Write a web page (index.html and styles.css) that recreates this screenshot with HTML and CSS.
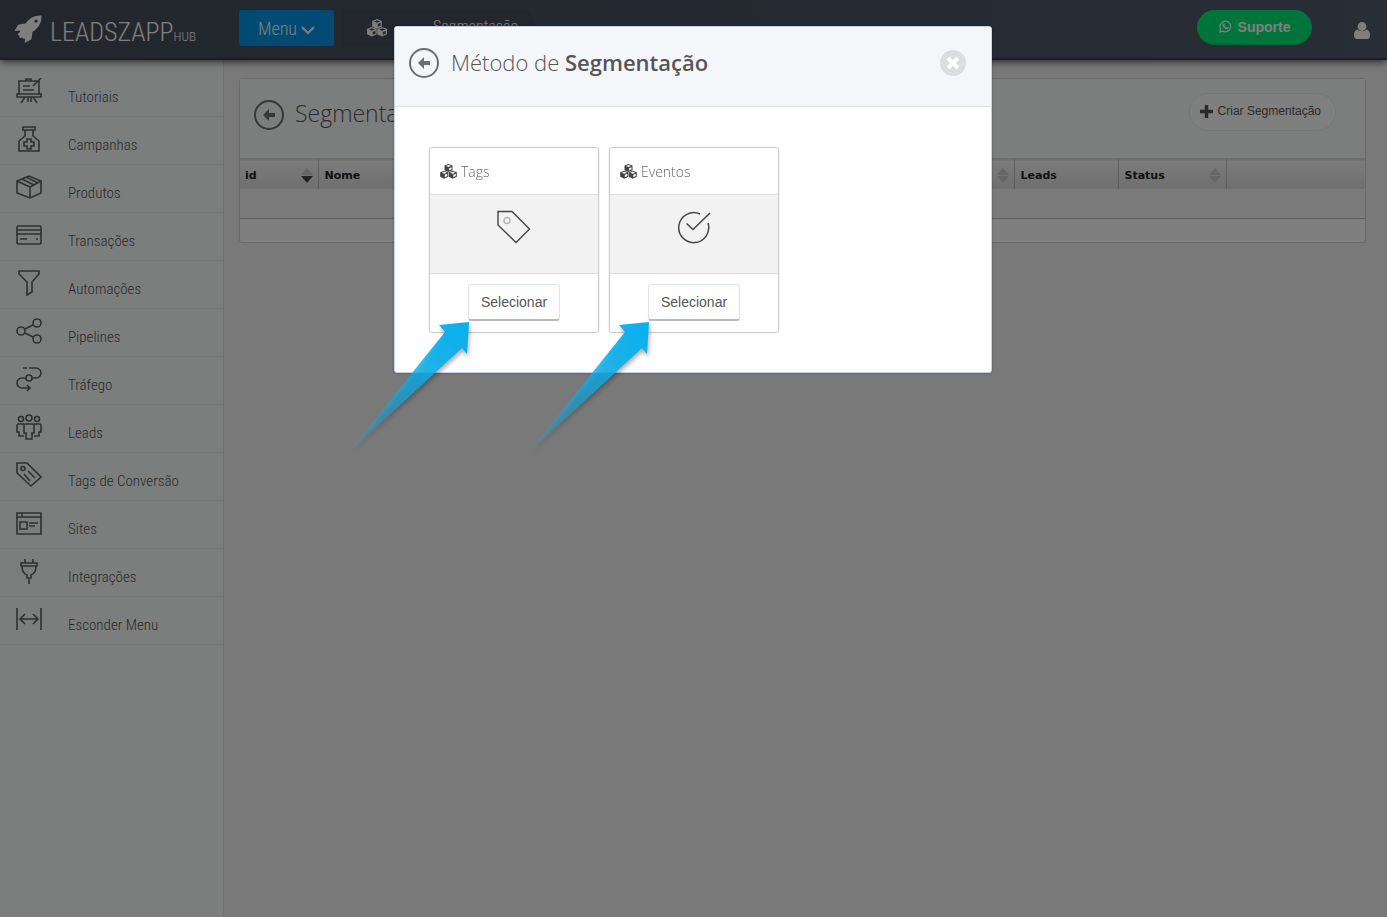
FILE: index.html
```html
<!DOCTYPE html>
<html lang="pt-BR">
<head>
    <meta charset="UTF-8">
    <meta name="viewport" content="width=device-width, initial-scale=1.0">
    <title>LeadszApp Hub - Segmentação</title>
    <link rel="stylesheet" href="styles.css">
</head>
<body>
    <!-- shared icons -->
    <svg class="sprite" aria-hidden="true">
        <symbol id="cubes" viewBox="0 0 20 18">
            <g fill="currentColor">
                <path d="M10 0l4.800 1.900v5.600L10 9.700 5.200 7.500V1.900z"/>
                <path d="M4.900 8l4.800 2v5.300l-4.800 2.300L0 15.300V10z"/>
                <path d="M15.100 8l4.900 2v5.300l-4.900 2.300-4.800-2.300V10z"/>
            </g>
            <g class="cube-top">
                <path d="M10 1.300l3 1.200-3 1.200-3-1.200z"/>
                <path d="M4.900 9.300l3 1.200-3 1.200-3-1.200z"/>
                <path d="M15.100 9.300l3 1.200-3 1.200-3-1.200z"/>
                <path d="M10.700 5l2.900-1.200v2.600l-2.900 1.300z"/>
                <path d="M5.600 13l2.900-1.200v2.600l-2.900 1.400z"/>
                <path d="M15.800 13l2.900-1.200v2.600l-2.900 1.400z"/>
            </g>
        </symbol>
        <symbol id="back" viewBox="0 0 30 30">
            <circle cx="15" cy="15" r="14" fill="none" stroke="currentColor" stroke-width="2"/>
            <path d="M9 15l6-6v4h6v4h-6v4z" fill="currentColor"/>
        </symbol>
        <symbol id="arrow" viewBox="0 0 130 140">
            <path d="M124 7L94 10l6 7L2 139l115-106 5 6z" fill="url(#arrowFill)"/>
        </symbol>
        <linearGradient id="arrowFill" gradientUnits="userSpaceOnUse" x1="118" y1="14" x2="2" y2="139">
            <stop offset="0" stop-color="#0ab0ee"/>
            <stop offset="0.250" stop-color="#0ab0ee" stop-opacity="0.900"/>
            <stop offset="0.500" stop-color="#0ab0ee" stop-opacity="0.680"/>
            <stop offset="1" stop-color="#0ab0ee" stop-opacity="0.080"/>
        </linearGradient>
    </svg>

    <header class="topbar">
        <a class="logo" href="#">
            <svg class="logo-icon" viewBox="0 0 28 28" fill="currentColor">
                <path fill-rule="evenodd" d="M27.500.500C20 .300 15.500 3 11.500 8.500L5 9.500c-.600.100-1 .600-1.300 1.100L.500 16l6-.500-1 2-2 1.500 1.800 2 .400 2.200 2-.700 2.300 1.500 1-.700-.200 4.700 5.700-3.200c.800-.500 1.100-1 1.200-1.800l.700-6C24.500 13 27.800 8 27.500.500zM22 4.400a1.700 1.700 0 1 1 0 3.400 1.700 1.700 0 0 1 0-3.400z"/>
            </svg>
            <span class="logo-text">LEADSZAPP<small>HUB</small></span>
        </a>
        <button class="menu-btn" type="button">Menu
            <svg viewBox="0 0 14 9" width="14" height="9"><path d="M1 1l6 6 6-6" fill="none" stroke="currentColor" stroke-width="2"/></svg>
        </button>
        <nav class="crumbs">
            <a href="#" class="crumb-home" aria-label="Início"><svg width="20" height="18"><use href="#cubes"/></svg></a>
            <a href="#" class="crumb-page">Segmentação</a>
        </nav>
        <button class="support-btn" type="button">
            <svg viewBox="0 0 14 14" width="13" height="13">
                <path d="M1 13l.900-3.200a5.700 5.700 0 1 1 2.200 2.200z" fill="none" stroke="currentColor" stroke-width="1.300"/>
                <path d="M4.500 3.800l1-.200.800 1.800-.600.800c.500 1 1.200 1.600 2.100 2l.800-.800 1.700.900c.100 1-.900 1.700-1.800 1.600C6 9.600 4 7.300 3.900 5.300c0-.700.200-1.200.600-1.500z" fill="currentColor"/>
            </svg>
            Suporte
        </button>
        <a class="user" href="#" aria-label="Usuário">
            <svg viewBox="0 0 16 17" width="16" height="17" fill="currentColor"><circle cx="8" cy="4.500" r="4.400"/><path d="M3.800 7.500C1 7.800 0 10.500 0 13.500 0 15.500 1 17 3 17h10c2 0 3-1.500 3-3.500 0-3-1-5.700-3.800-6C10 9.800 6 9.800 3.800 7.500z"/></svg>
        </a>
    </header>

    <div class="layout">
        <nav class="sidebar">
            <a href="#"><svg viewBox="0 0 26 26"><path d="M3 16V3h20v13M1 16h24v3H1zM10 3V1h5v2M7 8h7M7 12h11M17 8l8-8M9 19l-4 6M17 19l4 6M12 19v5M15 19v5"/></svg><span>Tutoriais</span></a>
            <a href="#"><svg viewBox="0 0 26 26"><path d="M7 1h12v3H7zM9 4v6l-6 5v10h20V15l-6-5V4M11 13h4v3h3v4h-3v3h-4v-3H8v-4h3z"/></svg><span>Campanhas</span></a>
            <a href="#"><svg viewBox="0 0 26 26"><path d="M1 7l12-5 12 5v12l-11 5-13-5zM1 7l13 6 11-6M14 13v11M6 5l12 6M10 3l12 6"/></svg><span>Produtos</span></a>
            <a href="#"><svg viewBox="0 0 26 26"><path d="M2 4h22l1 1v16l-1 1H2l-1-1V5zM1 8h24M1 12h24M4 17h7M20 17h2"/></svg><span>Transações</span></a>
            <a href="#"><svg viewBox="0 0 26 26"><path d="M3 1h20v3l-7 8v10l-5 3V12L3 4z"/></svg><span>Automações</span></a>
            <a href="#"><svg viewBox="0 0 26 26"><circle cx="5" cy="13" r="4"/><circle cx="21" cy="5" r="4"/><circle cx="21" cy="21" r="4"/><path d="M9 11l8-4M9 15l8 4"/></svg><span>Pipelines</span></a>
            <a href="#"><svg viewBox="0 0 26 26"><circle cx="13" cy="12" r="3"/><path d="M7 2h4M13 2h7a5 5 0 0 1 0 10h-4M10 12H6a5 5 0 0 0 0 10h8M11 19l3 3-3 3"/></svg><span>Tráfego</span></a>
            <a href="#"><svg viewBox="0 0 26 26"><circle cx="13" cy="4" r="3"/><circle cx="5" cy="5" r="2.500"/><circle cx="21" cy="5" r="2.500"/><path d="M9 10h8l1 1v8h-2v6h-6v-6H8v-8zM8 10H2l-1 1v7h2v4h5M18 10h6l1 1v7h-2v4h-5"/></svg><span>Leads</span></a>
            <a href="#"><svg viewBox="0 0 26 26"><path d="M1 1h10l14 14-10 9L1 11zM8 12l6 7M12 9l7 7"/><circle cx="7" cy="6.500" r="2"/></svg><span>Tags de Conversão</span></a>
            <a href="#"><svg viewBox="0 0 26 26"><path d="M1 3h24v21H1zM1 7h24M6 3v4M4 12h7v7H4zM13 13h9M13 16h6"/></svg><span>Sites</span></a>
            <a href="#"><svg viewBox="0 0 26 26"><path d="M9 1v4M17 1v4M5 5h16v3H5zM6 8c0 6 2 8 5 9v3h4v-3c3-1 5-3 5-9M13 21v5"/></svg><span>Integrações</span></a>
            <a href="#"><svg viewBox="0 0 26 26"><path d="M1 2v22M25 2v22M5 13h16M9 8l-5 5 5 5M17 8l5 5-5 5"/></svg><span>Esconder Menu</span></a>
        </nav>

        <main class="content">
            <section class="panel">
                <div class="panel-head">
                    <a href="#" class="back" aria-label="Voltar"><svg width="30" height="30"><use href="#back"/></svg></a>
                    <h1>Segmentação</h1>
                    <button class="create-btn" type="button">
                        <svg viewBox="0 0 13 13" width="13" height="13"><path d="M6.500 0v13M0 6.500h13" stroke="currentColor" stroke-width="3.500"/></svg>
                        Criar Segmentação
                    </button>
                </div>
                <table class="grid">
                    <thead>
                        <tr>
                            <th class="col-id"><div>id<i class="sort desc"></i></div></th>
                            <th><div>Nome<i class="sort"></i></div></th>
                            <th class="col-leads"><div>Leads</div></th>
                            <th class="col-status"><div>Status<i class="sort"></i></div></th>
                            <th class="col-actions"></th>
                        </tr>
                    </thead>
                    <tbody>
                        <tr><td colspan="5"></td></tr>
                    </tbody>
                </table>
                <div class="panel-foot"></div>
            </section>
        </main>
    </div>

    <div class="backdrop">
        <div class="modal" role="dialog" aria-labelledby="modal-title">
            <div class="modal-head">
                <a href="#" class="back" aria-label="Voltar"><svg width="30" height="30"><use href="#back"/></svg></a>
                <h2 id="modal-title">Método de <b>Segmentação</b></h2>
                <button class="close" type="button" aria-label="Fechar">
                    <svg viewBox="0 0 26 26" width="26" height="26"><circle cx="13" cy="13" r="13" fill="#dcdddf"/><path d="M8 8l10 10M18 8L8 18" stroke="#fff" stroke-width="4"/></svg>
                </button>
            </div>
            <div class="modal-body">
                <div class="card">
                    <h3><svg width="17" height="15"><use href="#cubes"/></svg>Tags</h3>
                    <div class="card-icon">
                        <svg viewBox="0 0 34 34" width="34" height="34" fill="none"><path d="M1 1.500h14L32.500 19 19 32.500 1 15z" stroke="#444" stroke-width="1.400"/><circle cx="10" cy="10.500" r="3" stroke="#b5b5b5" stroke-width="1.400"/></svg>
                    </div>
                    <div class="card-foot">
                        <button class="select-btn" type="button">Selecionar</button>
                        <svg class="pointer"><use href="#arrow"/></svg>
                    </div>
                </div>
                <div class="card">
                    <h3><svg width="17" height="15"><use href="#cubes"/></svg>Eventos</h3>
                    <div class="card-icon">
                        <svg viewBox="0 0 34 34" width="34" height="34" fill="none" stroke="#444" stroke-width="1.500"><path d="M23 4A15 15 0 1 0 31 13M9.500 13.500l6.500 6L33 3"/></svg>
                    </div>
                    <div class="card-foot">
                        <button class="select-btn" type="button">Selecionar</button>
                        <svg class="pointer"><use href="#arrow"/></svg>
                    </div>
                </div>
            </div>
        </div>
    </div>
</body>
</html>
```
FILE: styles.css
```css
* {
    box-sizing: border-box;
}
body {
    margin: 0;
    min-height: 100vh;
    display: flex;
    flex-direction: column;
    background: #f3f3f3;
    font-family: "Roboto Condensed", Roboto, sans-serif;
    color: #555;
}
a {
    color: inherit;
    text-decoration: none;
}
button {
    font: inherit;
    color: inherit;
    cursor: pointer;
}
h1, h2, h3 {
    margin: 0;
    font-weight: 300;
    font-family: "Open Sans", sans-serif;
}
.sprite {
    position: absolute;
    width: 0;
    height: 0;
}

/* top bar */
.topbar {
    height: 60px;
    display: flex;
    align-items: flex-start;
    padding: 10px 17px 0 14px;
    background: linear-gradient(to right, #464d5a, #505a6c);
    border-bottom: 2px solid #3a3d42;
    box-shadow: 0 1px 8px rgba(0, 0, 0, 0.8);
    color: #fff;
    position: relative;
}
.logo {
    display: flex;
    width: 225px;
    padding-top: 5px;
}
.logo-icon {
    width: 28px;
    height: 28px;
    margin-right: 8px;
}
.logo-text {
    font-size: 26px;
    font-weight: 300;
    line-height: 35px;
}
.logo-text small {
    font-size: 13px;
}
.menu-btn {
    width: 95px;
    height: 36px;
    padding: 0;
    border: 0;
    border-radius: 3px;
    background: #0094e6;
    font-size: 18px;
    font-weight: 300;
}
.crumbs {
    display: flex;
    height: 36px;
    margin-left: 8px;
    border-radius: 3px;
    background: #464c5a;
    clip-path: polygon(0 0, 186px 0, 100% 100%, 0 100%);
}
.crumb-home {
    width: 70px;
    padding: 9px 0 0 25px;
    --cube-top: #464c5a;
}
.crumb-page {
    padding: 0 28px 0 21px;
    font-size: 16px;
    font-weight: 300;
    line-height: 34px;
}
.cube-top {
    fill: var(--cube-top, #fff);
}
.support-btn {
    display: flex;
    align-items: center;
    justify-content: center;
    gap: 6px;
    width: 115px;
    height: 35px;
    margin-left: auto;
    border: 0;
    border-bottom: 2px solid #00d068;
    border-radius: 18px;
    background: #00ea76;
    font-family: "Liberation Sans", Arial, sans-serif;
    font-size: 14px;
    font-weight: bold;
}
.user {
    margin: 12px 0 0 42px;
}

/* side menu */
.layout {
    flex: 1;
    display: flex;
}
.sidebar {
    width: 224px;
    padding-top: 9px;
    background: #f8fcfb;
    border-right: 1px solid #dcdede;
}
.sidebar a {
    display: flex;
    height: 48px;
    padding: 9px 0 0 16px;
    border-bottom: 1px solid #e9ebeb;
    font-size: 15px;
    font-weight: 300;
    color: #555;
}
.sidebar svg {
    width: 26px;
    height: 26px;
    margin-right: 26px;
    fill: none;
    stroke: #606060;
    stroke-width: 1.600;
}
.sidebar span {
    padding-top: 9px;
    line-height: 20px;
}

/* list panel */
.content {
    flex: 1;
    padding: 18px 21px 18px 15px;
}
.panel {
    border: 1px solid #ccd5da;
    border-radius: 3px;
    background: #fff;
}
.panel-head {
    display: flex;
    align-items: flex-start;
    height: 80px;
    padding: 14px 29px 0 14px;
    background: #f8fcfa;
    border-bottom: 1px solid #ddd;
}
.back {
    height: 30px;
    color: #6d6e72;
}
.panel-head .back {
    margin-top: 7px;
}
.panel-head h1 {
    margin-left: 11px;
    font-size: 23px;
    line-height: 40px;
}
.create-btn {
    display: flex;
    align-items: center;
    gap: 5px;
    height: 38px;
    margin-left: auto;
    padding: 0 14px 2px 10px;
    border: 1px solid #ededed;
    border-radius: 19px;
    background: #fff;
    font-family: "Liberation Sans", Arial, sans-serif;
    font-size: 12px;
}
.grid {
    width: 100%;
    table-layout: fixed;
    border-collapse: collapse;
    font-family: "DejaVu Sans", Verdana, sans-serif;
    font-size: 11px;
}
.grid th {
    height: 29px;
    padding: 2px 5px 0 6px;
    border-top: 1px solid #ddd;
    border-right: 1px solid #bbb;
    background: linear-gradient(#f8f8f8, #dedede);
    text-align: left;
    color: #222;
}
.grid th:first-child {
    padding-left: 5px;
}
.grid th:last-child {
    border-right: 0;
}
.grid th div {
    display: flex;
    align-items: center;
    justify-content: space-between;
}
.col-id {
    width: 78px;
}
.col-leads {
    width: 104px;
}
.col-status {
    width: 108px;
}
.col-actions {
    width: 139px;
}
.grid td {
    height: 30px;
    padding: 0;
    background: #f6f6f6;
    border-bottom: 1px solid #bbb;
}
.sort::before,
.sort::after {
    content: "";
    display: block;
    border: 6px solid transparent;
    border-top-width: 0;
    border-bottom: 7px solid #ccc;
}
.sort::after {
    margin-top: 1px;
    border-top: 7px solid #ccc;
    border-bottom: 0;
}
.sort.desc::after {
    border-top-color: #444;
}
.panel-foot {
    height: 23px;
}

/* modal */
.backdrop {
    position: fixed;
    inset: 0;
    padding: 26px 17px 26px 16px;
    background: rgba(0, 0, 0, 0.5);
}
.modal {
    max-width: 598px;
    margin: 0 auto;
    border: 1px solid #c9d3df;
    border-radius: 3px;
    background: #fff;
    box-shadow: 0 0 3px rgba(0, 0, 0, 0.3);
}
.modal-head {
    display: flex;
    align-items: flex-start;
    height: 80px;
    padding: 21px 25px 0 14px;
    background: #f5f6f9;
    border-bottom: 1px solid #dcdfe3;
}
.modal-head h2 {
    margin: -6px 0 0 12px;
    font-size: 22px;
    line-height: 40px;
}
.modal-head b {
    font-weight: 600;
}
.close {
    height: 26px;
    margin: 2px 0 0 auto;
    padding: 0;
    border: 0;
    background: none;
}
.modal-body {
    display: flex;
    flex-wrap: wrap;
    gap: 10px;
    padding: 40px 34px 39px;
}
.card {
    width: 170px;
    border: 1px solid #ccc;
    border-radius: 3px;
    box-shadow: 0 0 2px rgba(0, 0, 0, 0.15);
}
.card h3 {
    display: flex;
    align-items: center;
    gap: 4px;
    height: 46px;
    padding-left: 10px;
    font-size: 14px;
    color: #666;
}
.card h3 svg {
    color: #444;
}
.card-icon {
    height: 80px;
    padding-top: 15px;
    border: solid #ddd;
    border-width: 1px 0;
    background: #f2f2f2;
    text-align: center;
}
.card-foot {
    position: relative;
    padding: 10px 0 11px;
    text-align: center;
}
.select-btn {
    width: 92px;
    height: 37px;
    padding: 0;
    border: 1px solid #dfe3ea;
    border-bottom: 2px solid #b9b9b9;
    border-radius: 3px;
    background: #fff;
    font-family: "Liberation Sans", Arial, sans-serif;
    font-size: 14px;
    vertical-align: top;
}
.pointer {
    position: absolute;
    top: 41px;
    left: -85px;
    width: 130px;
    height: 140px;
    overflow: visible;
    filter: drop-shadow(1px 3px 2px rgba(0, 0, 0, 0.35));
    pointer-events: none;
}
```
